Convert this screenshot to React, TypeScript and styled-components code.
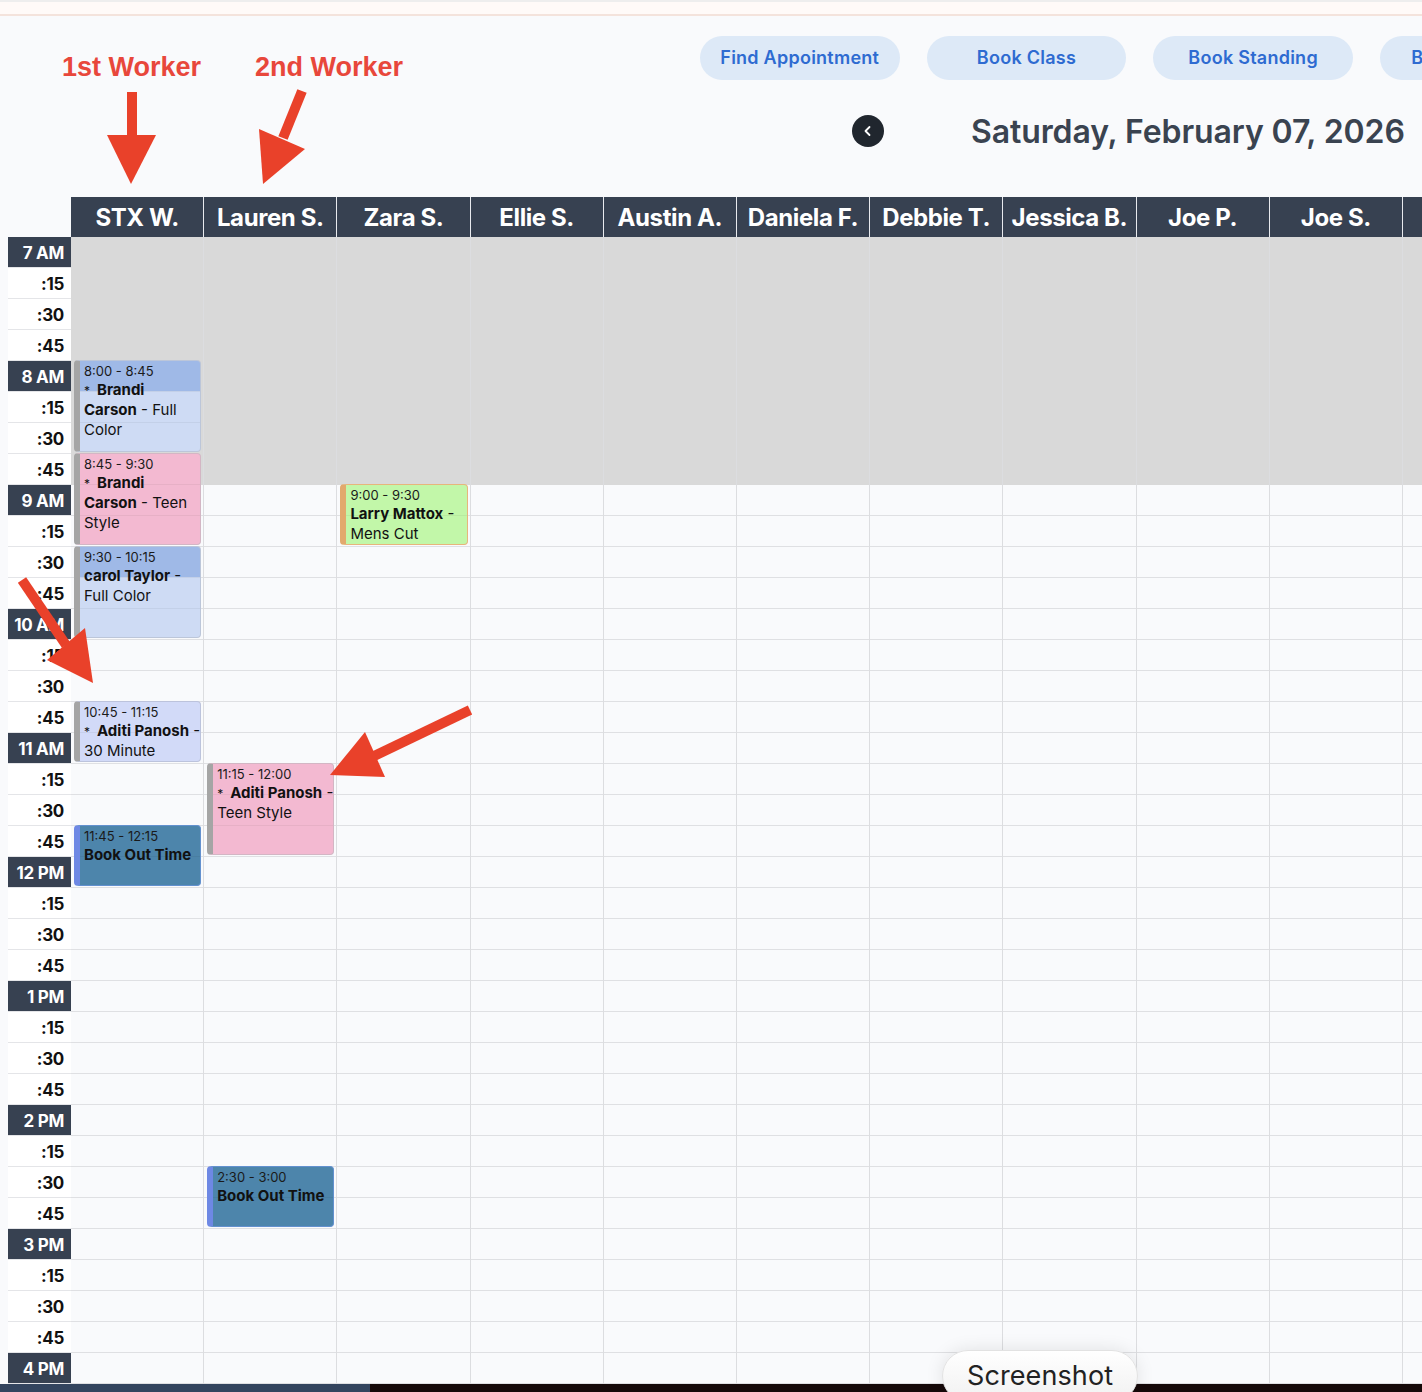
import { FC } from "react";
import styled, { createGlobalStyle, css } from "styled-components";

const SLOT = 31;
const COL_W = 133.2;

type Kind = "color" | "teen" | "short" | "out" | "walkin";

interface TAppt {
  worker: number;
  start: number;
  len: number;
  time: string;
  name: string;
  service?: string;
  star?: boolean;
  kind: Kind;
}

const workers = [
  "STX W.",
  "Lauren S.",
  "Zara S.",
  "Ellie S.",
  "Austin A.",
  "Daniela F.",
  "Debbie T.",
  "Jessica B.",
  "Joe P.",
  "Joe S.",
  "",
];

const appts: TAppt[] = [
  { worker: 0, start: 4, len: 3, time: "8:00 - 8:45", name: "Brandi Carson", service: "Full Color", star: true, kind: "color" },
  { worker: 0, start: 7, len: 3, time: "8:45 - 9:30", name: "Brandi Carson", service: "Teen Style", star: true, kind: "teen" },
  { worker: 0, start: 10, len: 3, time: "9:30 - 10:15", name: "carol Taylor", service: "Full Color", kind: "color" },
  { worker: 0, start: 15, len: 2, time: "10:45 - 11:15", name: "Aditi Panosh", service: "30 Minute", star: true, kind: "short" },
  { worker: 0, start: 19, len: 2, time: "11:45 - 12:15", name: "Book Out Time", kind: "out" },
  { worker: 1, start: 17, len: 3, time: "11:15 - 12:00", name: "Aditi Panosh", service: "Teen Style", star: true, kind: "teen" },
  { worker: 1, start: 30, len: 2, time: "2:30 - 3:00", name: "Book Out Time", kind: "out" },
  { worker: 2, start: 8, len: 2, time: "9:00 - 9:30", name: "Larry Mattox", service: "Mens Cut", kind: "walkin" },
];

// 7:00 through 4:00 PM, quarter hours
const slots = Array.from({ length: 37 }, (_, i) => {
  const h = 7 + Math.floor(i / 4);
  const m = (i % 4) * 15;
  if (m === 0) {
    const h12 = h > 12 ? h - 12 : h;
    return { hour: true, label: `${h12} ${h >= 12 ? "PM" : "AM"}` };
  }
  return { hour: false, label: `:${m}` };
});

const BLOCKED_UNTIL = 8; // 7:00 - 9:00 unavailable

const palette: Record<Kind, { bg: string; head?: string; bar: string; border: string }> = {
  color: { bg: "#cedbf4", head: "#9fb9e7", bar: "#a5a5a5", border: "#bcc6d9" },
  teen: { bg: "#f3b9d1", bar: "#a5a5a5", border: "#d3b6c4" },
  short: { bg: "#d2daf8", bar: "#a5a5a5", border: "#bcc3dc" },
  out: { bg: "#4d85ab", bar: "#6e88e4", border: "#6391cf" },
  walkin: { bg: "#c2f7a9", bar: "#e2a96d", border: "#e7b57c" },
};

const GlobalStyle = createGlobalStyle`
  html, body {
    margin: 0;
    padding: 0;
    background: #f9fafc;
    overflow: hidden;
  }
  body {
    font-family: Inter, "Noto Sans", sans-serif;
    color: #111;
  }
`;

const Page = styled.div`
  position: relative;
  width: 1422px;
  height: 1392px;
  overflow: hidden;
  background: #f9fafc;
`;

const TopStrip = styled.div`
  height: 12px;
  background: #fffaf8;
  border-top: 2px solid #eeeeee;
  border-bottom: 2px solid #f4e3dc;
`;

const Header = styled.header`
  box-sizing: border-box;
  height: 181px;
  padding: 20px 0 0 700px;
  display: flex;
  flex-direction: column;
`;

const Toolbar = styled.div`
  display: flex;
  gap: 27.2px;
  white-space: nowrap;
`;

const PillButton = styled.button`
  flex: 0 0 199.5px;
  height: 44px;
  border: none;
  border-radius: 22px;
  background: #dde9f7;
  color: #2e6bd1;
  font-family: Inter, sans-serif;
  font-size: 18px;
  font-weight: 600;
  letter-spacing: 0.25px;
  line-height: 42px;
  text-align: center;
  padding: 0;
`;

const DateRow = styled.div`
  display: flex;
  align-items: center;
  height: 40px;
  margin-top: 31px;
  padding-left: 152px;
  gap: 87px;
`;

const BackButton = styled.div`
  width: 32px;
  height: 32px;
  border-radius: 50%;
  background: #20262e;
  display: flex;
  align-items: center;
  justify-content: center;
`;

const DateTitle = styled.h1`
  margin: 0;
  font-size: 32px;
  font-weight: 600;
  color: #3a4350;
  letter-spacing: -0.1px;
  white-space: nowrap;
`;

const Calendar = styled.div`
  display: flex;
  padding-left: 8px;
`;

const TimeColumn = styled.div`
  flex: 0 0 63px;
  display: flex;
  flex-direction: column;
`;

const HeadSpacer = styled.div`
  height: 40px;
`;

const TimeLabel = styled.div<{ $hour: boolean }>`
  box-sizing: border-box;
  height: 31px;
  border-bottom: 1px solid #e4e5e8;
  display: flex;
  align-items: center;
  justify-content: flex-end;
  padding: 1px 7px 0 0;
  font-size: 17px;
  font-weight: 700;
  letter-spacing: -0.3px;
  ${(p) =>
    p.$hour
      ? css`
          background: #374151;
          color: #fff;
        `
      : css`
          background: #fff;
          color: #111;
        `}
`;

const WorkerColumn = styled.div`
  flex: 0 0 ${COL_W}px;
  display: flex;
  flex-direction: column;
`;

const WorkerHead = styled.div`
  height: 40px;
  background: #374151;
  border-right: 1px solid #e8eaee;
  color: #fff;
  font-size: 24px;
  font-weight: 700;
  letter-spacing: -0.4px;
  display: flex;
  align-items: center;
  justify-content: center;
  white-space: nowrap;
  overflow: hidden;
`;

const ColumnBody = styled.div`
  position: relative;
  border-right: 1px solid #dcdde0;
`;

const Slot = styled.div<{ $blocked: boolean }>`
  height: 30px;
  border-bottom: 1px solid ${(p) => (p.$blocked ? "#d9d9d9" : "#dfe0e3")};
  background: ${(p) => (p.$blocked ? "#d9d9d9" : "#f9fafc")};
`;

// faint slot lines show through every booking
const slotLines = `repeating-linear-gradient(to bottom, transparent 0 30px, rgba(0, 0, 0, 0.05) 30px 31px)`;

const Appt = styled.div<{ $kind: Kind }>`
  position: absolute;
  left: 3px;
  right: 2px;
  box-sizing: border-box;
  border-radius: 4px;
  overflow: hidden;
  padding: 1px 0 0 4px;
  ${(p) => {
    const c = palette[p.$kind];
    const fill = c.head
      ? `linear-gradient(to bottom, ${c.head} 0 30px, ${c.bg} 30px)`
      : c.bg;
    return css`
      background: ${slotLines}, ${fill};
      border: 1px solid ${c.border};
      border-left: 6px solid ${c.bar};
    `;
  }}
`;

const ApptTime = styled.div`
  font-size: 13px;
  line-height: 18px;
  color: #1a1a1a;
`;

const ApptText = styled.div`
  font-size: 15px;
  line-height: 20px;
  color: #111;
  b {
    font-weight: 700;
  }
`;

const Star = styled.span`
  font-size: 12px;
  line-height: 1;
  margin-right: 7px;
`;

const Note = styled.div<{ $left: number }>`
  position: absolute;
  top: 52px;
  left: ${(p) => p.$left}px;
  font-family: "Liberation Sans", Arial, sans-serif;
  font-size: 27px;
  font-weight: 700;
  color: #e8473b;
  white-space: nowrap;
`;

const Overlay = styled.svg`
  position: absolute;
  left: 0;
  top: 0;
  pointer-events: none;
`;

const BottomBar = styled.div`
  height: 8px;
  background: linear-gradient(to right, #33445e 0 370px, #150909 370px);
`;

const ShotPill = styled.div`
  position: absolute;
  left: 942px;
  top: 1350px;
  width: 196px;
  height: 52px;
  box-sizing: border-box;
  border-radius: 26px;
  border: 1px solid #e2e2e2;
  background: linear-gradient(to bottom, #ffffff, #f1f1f1);
  box-shadow: 0 0 18px rgba(0, 0, 0, 0.1);
  padding: 8px 0 0 24px;
  font-size: 27px;
  color: #222;
  letter-spacing: 0.1px;
`;

const AppointmentCard: FC<{ a: TAppt }> = ({ a }) => (
  <Appt
    $kind={a.kind}
    style={{ top: a.start * SLOT - 1, height: a.len * SLOT - 1 }}
  >
    <ApptTime>{a.time}</ApptTime>
    <ApptText>
      {a.star && <Star>*</Star>}
      <b>{a.name}</b>
      {a.service && (
        <>
          {" "}
          - {a.service}
        </>
      )}
    </ApptText>
  </Appt>
);

const Arrow: FC<{ from: [number, number]; to: [number, number]; head: [number, number][] }> = ({
  from,
  to,
  head,
}) => (
  <g fill="#e9412a" stroke="#e9412a">
    <line x1={from[0]} y1={from[1]} x2={to[0]} y2={to[1]} strokeWidth={10} />
    <polygon points={head.map((p) => p.join(",")).join(" ")} stroke="none" />
  </g>
);

const App = () => {
  return (
    <Page>
      <GlobalStyle />
      <TopStrip />
      <Header>
        <Toolbar>
          <PillButton>Find Appointment</PillButton>
          <PillButton>Book Class</PillButton>
          <PillButton>Book Standing</PillButton>
          <PillButton>Book Recurring</PillButton>
        </Toolbar>
        <DateRow>
          <BackButton>
            <svg width="14" height="14" viewBox="0 0 14 14">
              <path d="M8.5 3 L4.5 7 L8.5 11" fill="none" stroke="#fff" strokeWidth="1.8" strokeLinecap="round" strokeLinejoin="round" />
            </svg>
          </BackButton>
          <DateTitle>Saturday, February 07, 2026</DateTitle>
        </DateRow>
      </Header>

      <Calendar>
        <TimeColumn>
          <HeadSpacer />
          {slots.map((s, i) => (
            <TimeLabel key={i} $hour={s.hour}>
              {s.label}
            </TimeLabel>
          ))}
        </TimeColumn>
        {workers.map((w, wi) => (
          <WorkerColumn key={wi}>
            <WorkerHead>{w}</WorkerHead>
            <ColumnBody>
              {slots.map((_, i) => (
                <Slot key={i} $blocked={i < BLOCKED_UNTIL} />
              ))}
              {appts
                .filter((a) => a.worker === wi)
                .map((a, i) => (
                  <AppointmentCard a={a} key={i} />
                ))}
            </ColumnBody>
          </WorkerColumn>
        ))}
      </Calendar>
      <BottomBar />

      <Note $left={62}>1st Worker</Note>
      <Note $left={255}>2nd Worker</Note>
      <Overlay width="1422" height="1392">
        <Arrow from={[132, 92]} to={[132, 137]} head={[[107, 135], [156, 135], [131, 184]]} />
        <Arrow from={[302, 91]} to={[283, 138]} head={[[259, 129], [305, 149], [263, 184]]} />
        <Arrow from={[22, 580]} to={[66, 645]} head={[[47, 660], [85, 628], [93, 683]]} />
        <Arrow from={[470, 710]} to={[372, 757]} head={[[365, 732], [385, 777], [330, 775]]} />
      </Overlay>
      <ShotPill>Screenshot</ShotPill>
    </Page>
  );
};

export default App;
